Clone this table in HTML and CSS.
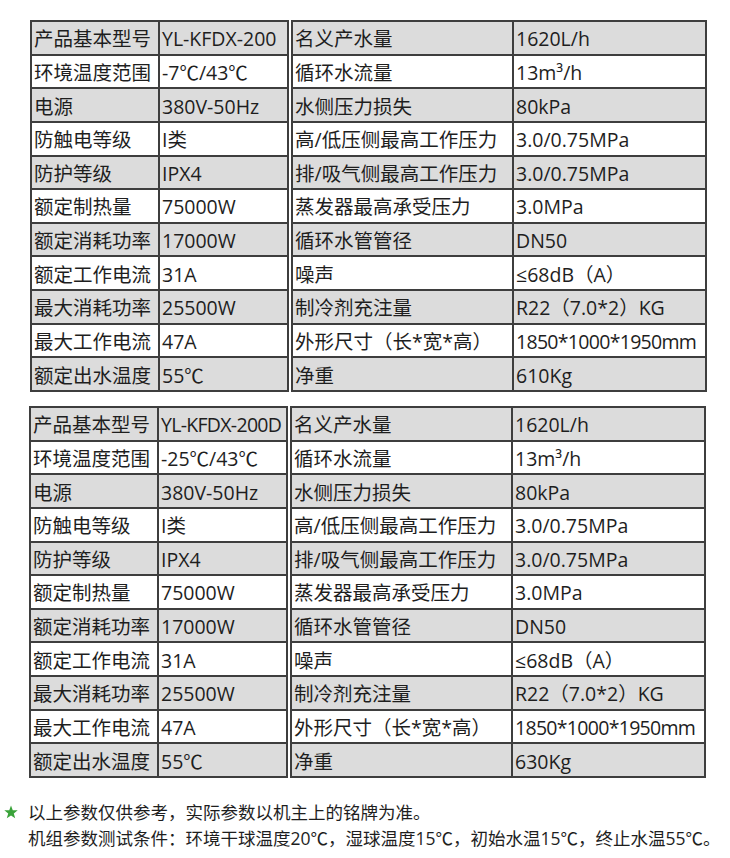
FILE: index.html
```html
<!DOCTYPE html>
<html lang="zh-CN">
<head>
<meta charset="utf-8">
<title>产品参数</title>
<link rel="stylesheet" href="styles.css">
</head>
<body>
<div class="page">
  <div class="spec-block">
    <table class="spec left">
      <colgroup><col class="c1"><col class="c2"></colgroup>
      <tr class="g"><td>产品基本型号</td><td>YL-KFDX-200</td></tr>
      <tr><td>环境温度范围</td><td>-7℃/43℃</td></tr>
      <tr class="g"><td>电源</td><td>380V-50Hz</td></tr>
      <tr><td>防触电等级</td><td>I类</td></tr>
      <tr class="g"><td>防护等级</td><td>IPX4</td></tr>
      <tr><td>额定制热量</td><td>75000W</td></tr>
      <tr class="g"><td>额定消耗功率</td><td>17000W</td></tr>
      <tr><td>额定工作电流</td><td>31A</td></tr>
      <tr class="g"><td>最大消耗功率</td><td>25500W</td></tr>
      <tr><td>最大工作电流</td><td>47A</td></tr>
      <tr class="g"><td>额定出水温度</td><td>55℃</td></tr>
    </table>
    <table class="spec right">
      <colgroup><col class="c3"><col class="c4"></colgroup>
      <tr class="g"><td>名义产水量</td><td>1620L/h</td></tr>
      <tr><td>循环水流量</td><td>13m³/h</td></tr>
      <tr class="g"><td>水侧压力损失</td><td>80kPa</td></tr>
      <tr><td>高/低压侧最高工作压力</td><td>3.0/0.75MPa</td></tr>
      <tr class="g"><td>排/吸气侧最高工作压力</td><td>3.0/0.75MPa</td></tr>
      <tr><td>蒸发器最高承受压力</td><td>3.0MPa</td></tr>
      <tr class="g"><td>循环水管管径</td><td>DN50</td></tr>
      <tr><td>噪声</td><td>≤68dB（A）</td></tr>
      <tr class="g"><td>制冷剂充注量</td><td>R22（7.0*2）KG</td></tr>
      <tr><td>外形尺寸（长*宽*高）</td><td class="narrow">1850*1000*1950mm</td></tr>
      <tr class="g"><td>净重</td><td>610Kg</td></tr>
    </table>
  </div>

  <div class="spec-block second">
    <table class="spec left">
      <colgroup><col class="c1"><col class="c2"></colgroup>
      <tr class="g"><td>产品基本型号</td><td class="narrow">YL-KFDX-200D</td></tr>
      <tr><td>环境温度范围</td><td>-25℃/43℃</td></tr>
      <tr class="g"><td>电源</td><td>380V-50Hz</td></tr>
      <tr><td>防触电等级</td><td>I类</td></tr>
      <tr class="g"><td>防护等级</td><td>IPX4</td></tr>
      <tr><td>额定制热量</td><td>75000W</td></tr>
      <tr class="g"><td>额定消耗功率</td><td>17000W</td></tr>
      <tr><td>额定工作电流</td><td>31A</td></tr>
      <tr class="g"><td>最大消耗功率</td><td>25500W</td></tr>
      <tr><td>最大工作电流</td><td>47A</td></tr>
      <tr class="g"><td>额定出水温度</td><td>55℃</td></tr>
    </table>
    <table class="spec right">
      <colgroup><col class="c3"><col class="c4"></colgroup>
      <tr class="g"><td>名义产水量</td><td>1620L/h</td></tr>
      <tr><td>循环水流量</td><td>13m³/h</td></tr>
      <tr class="g"><td>水侧压力损失</td><td>80kPa</td></tr>
      <tr><td>高/低压侧最高工作压力</td><td>3.0/0.75MPa</td></tr>
      <tr class="g"><td>排/吸气侧最高工作压力</td><td>3.0/0.75MPa</td></tr>
      <tr><td>蒸发器最高承受压力</td><td>3.0MPa</td></tr>
      <tr class="g"><td>循环水管管径</td><td>DN50</td></tr>
      <tr><td>噪声</td><td>≤68dB（A）</td></tr>
      <tr class="g"><td>制冷剂充注量</td><td>R22（7.0*2）KG</td></tr>
      <tr><td>外形尺寸（长*宽*高）</td><td class="narrow">1850*1000*1950mm</td></tr>
      <tr class="g"><td>净重</td><td>630Kg</td></tr>
    </table>
  </div>

  <div class="notes">
    <div class="note-line">
      <svg class="star" viewBox="0 0 24 24" width="14" height="14" aria-hidden="true"><polygon points="12,1 15,9 23.5,9.2 16.8,14.4 19.2,22.8 12,17.8 4.8,22.8 7.2,14.4 0.5,9.2 9,9" fill="#3aa33a"/></svg>
      <span>以上参数仅供参考，实际参数以机主上的铭牌为准。</span>
    </div>
    <div class="note-line indent">机组参数测试条件：环境干球温度20℃，湿球温度15℃，初始水温15℃，终止水温55℃。</div>
  </div>
</div>
</body>
</html>
```
FILE: styles.css
```css
html, body {
  margin: 0;
  padding: 0;
  background: #ffffff;
}
body {
  font-family: "Open Sans", "Noto Sans CJK SC", sans-serif;
  color: #1e1e1e;
}
.page {
  width: 730px;
  height: 858px;
  padding-top: 20px;
  box-sizing: border-box;
}
.spec-block {
  display: flex;
  gap: 2px;
  margin-left: 30px;
}
.spec-block.second {
  margin-top: 14px;
  margin-left: 29px;
}
.spec {
  border-collapse: collapse;
  table-layout: fixed;
  height: 372px;
  border: 2px solid #3e3e3e;
}
.spec.left { width: 257px; }
.spec.right { width: 414px; }
.c1 { width: 128px; }
.c2 { width: 129px; }
.c3 { width: 221px; }
.c4 { width: 193px; }
.spec td {
  border: 2px solid #3e3e3e;
  padding: 3px 0 0 2px;
  font-size: 19.5px;
  line-height: 28px;
  white-space: nowrap;
  overflow: hidden;
  vertical-align: middle;
}
.spec td.narrow {
  letter-spacing: -0.7px;
}
.spec tr.g td {
  background: #dcdcdc;
}
.notes {
  margin-top: 21px;
  font-size: 17.5px;
  line-height: 26px;
  color: #1e1e1e;
}
.note-line {
  display: flex;
  align-items: center;
  gap: 10px;
  padding-left: 4px;
}
.note-line.indent {
  padding-left: 28px;
}
.star {
  flex: none;
}
```
